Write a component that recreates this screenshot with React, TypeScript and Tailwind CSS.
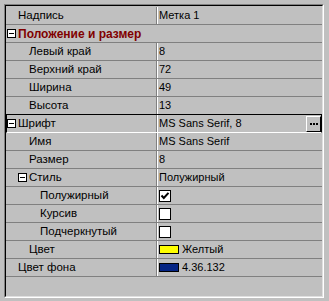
import React from "react";

const font = { fontFamily: '"Liberation Sans", Arial, sans-serif' };

function Box() {
  return (
    <span className="flex h-[9px] w-[9px] shrink-0 items-center justify-center border border-black bg-white">
      <span className="h-[1px] w-[5px] bg-black" />
    </span>
  );
}

function Check({ on }: { on?: boolean }) {
  return (
    <span className="flex h-[12px] w-[12px] shrink-0 items-center justify-center border border-black bg-white">
      {on ? (
        <svg width="10" height="10" viewBox="0 0 10 10">
          <path d="M1.5 4.5 L3.8 7 L8.5 1.8" stroke="black" strokeWidth="2" fill="none" />
        </svg>
      ) : null}
    </span>
  );
}

function Swatch({ color, label }: { color: string; label: string }) {
  return (
    <span className="flex items-center gap-[3px]">
      <span className={`h-[9px] w-[20px] border border-black ${color}`} />
      <span>{label}</span>
    </span>
  );
}

type RowProps = {
  name: React.ReactNode;
  value?: React.ReactNode;
  pad: string;
  selected?: boolean;
  lineBlack?: boolean;
};

function Row({ name, value, pad, selected, lineBlack }: RowProps) {
  const line = lineBlack
    ? "border-black"
    : selected
    ? "border-white"
    : "border-[#808080]";
  return (
    <div
      className={`flex h-[18px] shrink-0 border-b ${line} ${
        selected ? "border-l border-l-black border-r border-r-black" : ""
      }`}
    >
      <div
        className={`flex ${
          selected ? "w-[150px]" : "w-[151px]"
        } shrink-0 items-center gap-[2px] border-r border-r-[#808080] text-[11.5px] ${pad}`}
      >
        {name}
      </div>
      <div className="flex min-w-0 flex-1 items-center border-l border-l-white pl-[1px]">
        {value}
      </div>
    </div>
  );
}

export default function App() {
  return (
    <div
      className="h-[301px] w-[329px] bg-[#c0c0c0] pl-[4px] pt-[4px] text-[11px] text-black"
      style={font}
    >
      <div className="h-[294px] w-[320px] border-l border-t border-b border-r border-l-[#808080] border-t-[#808080] border-b-white border-r-white">
        <div className="flex h-full flex-col border-l border-t border-b border-r border-l-black border-t-black border-b-[#dfdfdf] border-r-[#dfdfdf] pt-[1px]">
          <Row name="Надпись" value="Метка 1" pad="pl-[12px]" />
          <div className="flex h-[18px] shrink-0 items-center gap-[2px] border-b border-[#808080] pl-[1px]">
            <Box />
            <span className="text-[12px] font-bold text-[#800000]">Положение и размер</span>
          </div>
          <Row name="Левый край" value="8" pad="pl-[23px]" />
          <Row name="Верхний край" value="72" pad="pl-[23px]" />
          <Row name="Ширина" value="49" pad="pl-[23px]" />
          <Row name="Высота" value="13" pad="pl-[23px]" lineBlack />
          <Row
            selected
            pad="pl-0"
            name={
              <>
                <Box />
                <span>Шрифт</span>
              </>
            }
            value={
              <div className="flex w-full items-center justify-between">
                <span>MS Sans Serif, 8</span>
                <span className="flex h-[16px] w-[15px] items-center justify-center gap-[1px] border-l border-t border-r border-b border-l-white border-t-white border-r-black border-b-black bg-[#c0c0c0]">
                  <span className="h-[2px] w-[2px] bg-black" />
                  <span className="h-[2px] w-[2px] bg-black" />
                  <span className="h-[2px] w-[2px] bg-black" />
                </span>
              </div>
            }
          />
          <Row name="Имя" value="MS Sans Serif" pad="pl-[23px]" />
          <Row name="Размер" value="8" pad="pl-[23px]" />
          <Row
            pad="pl-[12px]"
            name={
              <>
                <Box />
                <span>Стиль</span>
              </>
            }
            value="Полужирный"
          />
          <Row name="Полужирный" value={<Check on />} pad="pl-[34px]" />
          <Row name="Курсив" value={<Check />} pad="pl-[34px]" />
          <Row name="Подчеркнутый" value={<Check />} pad="pl-[34px]" />
          <Row
            name="Цвет"
            value={<Swatch color="bg-[#ffff00]" label="Желтый" />}
            pad="pl-[23px]"
          />
          <Row
            name="Цвет фона"
            value={<Swatch color="bg-[#042484]" label="4.36.132" />}
            pad="pl-[12px]"
          />
        </div>
      </div>
    </div>
  );
}
